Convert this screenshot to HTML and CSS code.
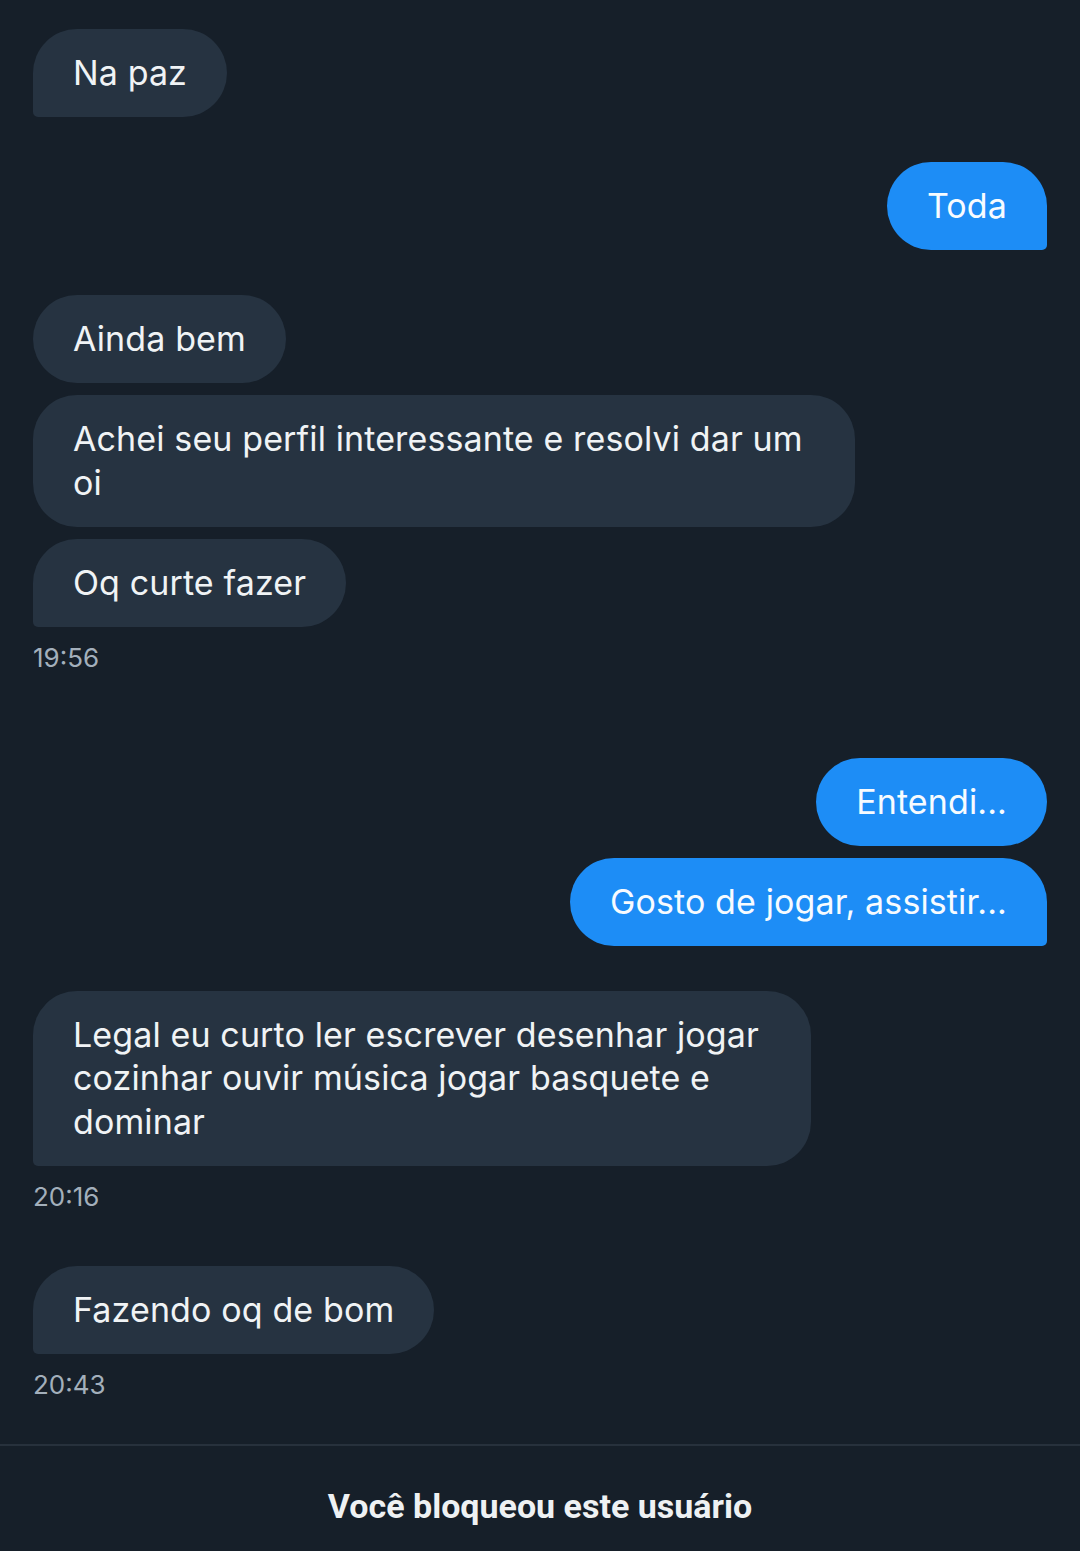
FILE: index.html
```html
<!DOCTYPE html>
<html lang="pt-BR">
<head>
<meta charset="utf-8">
<title>Conversa</title>
<link rel="stylesheet" href="styles.css">
</head>
<body>
<main class="chat">
  <section class="group them">
    <div class="bubble last">Na paz</div>
  </section>
  <section class="group me">
    <div class="bubble last">Toda</div>
  </section>
  <section class="group them">
    <div class="bubble">Ainda bem</div>
    <div class="bubble multi">Achei seu perfil interessante e resolvi dar um<br>oi</div>
    <div class="bubble last">Oq curte fazer</div>
    <div class="time">19:56</div>
  </section>
  <section class="group me gap-lg">
    <div class="bubble">Entendi...</div>
    <div class="bubble last">Gosto de jogar, assistir...</div>
  </section>
  <section class="group them">
    <div class="bubble multi last">Legal eu curto ler escrever desenhar jogar<br>cozinhar ouvir música jogar basquete e<br>dominar</div>
    <div class="time">20:16</div>
  </section>
  <section class="group them gap-md">
    <div class="bubble last">Fazendo oq de bom</div>
    <div class="time">20:43</div>
  </section>
</main>
<footer class="footer">Você bloqueou este usuário</footer>
</body>
</html>
```
FILE: styles.css
```css
html, body {
  margin: 0;
  padding: 0;
  height: 100%;
}
body {
  background: #161f29;
  display: flex;
  flex-direction: column;
  font-family: Inter, "Noto Sans", sans-serif;
  color: #f1f4f6;
}
.chat {
  flex: 1;
  display: flex;
  flex-direction: column;
  padding: 29px 33px 0;
}
.group {
  display: flex;
  flex-direction: column;
  gap: 12px;
  align-items: flex-start;
}
.group + .group {
  margin-top: 45px;
}
.group.gap-lg {
  margin-top: 84px;
}
.group.gap-md {
  margin-top: 53px;
}
.group.me {
  align-items: flex-end;
}
.bubble {
  font-size: 34px;
  letter-spacing: 0.12px;
  line-height: 43.5px;
  padding: 22px 40px 22.5px 40px;
  border-radius: 44px;
  background: #263341;
  color: #f0f3f5;
  white-space: nowrap;
}
.bubble.multi {
  padding-right: 52px;
}
.them .bubble.last {
  border-bottom-left-radius: 5px;
}
.me .bubble {
  background: #1d8df6;
  color: #f7fbff;
}
.me .bubble.last {
  border-bottom-right-radius: 5px;
}
.time {
  font-size: 26px;
  line-height: 32px;
  color: #a3afbb;
  margin-top: 3px;
}
.footer {
  border-top: 2px solid #27313c;
  height: 107px;
  box-sizing: border-box;
  padding-top: 40px;
  text-align: center;
  font-family: Roboto, "Liberation Sans", sans-serif;
  font-weight: 700;
  font-size: 34px;
  line-height: 40px;
  color: #eef1f3;
}
```
